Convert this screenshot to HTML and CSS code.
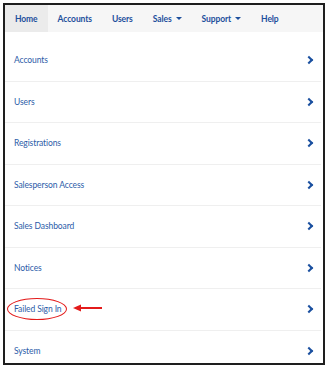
FILE: index.html
```html
<!DOCTYPE html>
<html lang="en">
<head>
    <meta charset="UTF-8">
    <meta name="viewport" content="width=device-width, initial-scale=1.0">
    <title>Admin Menu</title>
    <link rel="stylesheet" href="styles.css">
</head>
<body>
    <div class="frame">
        <nav class="topnav">
            <a class="tab active">Home</a>
            <a class="tab">Accounts</a>
            <a class="tab">Users</a>
            <a class="tab">Sales <span class="caret"></span></a>
            <a class="tab">Support <span class="caret"></span></a>
            <a class="tab">Help</a>
        </nav>

        <ul class="menu">
            <li><a>Accounts</a><span class="chev"></span></li>
            <li><a>Users</a><span class="chev"></span></li>
            <li><a>Registrations</a><span class="chev"></span></li>
            <li><a>Salesperson Access</a><span class="chev"></span></li>
            <li><a>Sales Dashboard</a><span class="chev"></span></li>
            <li><a>Notices</a><span class="chev"></span></li>
            <li class="marked">
                <a>Failed Sign In</a>
                <span class="ring"></span>
                <svg class="pointer" width="30" height="8" viewBox="0 0 30 8">
                    <path d="M6 4 H29" stroke="#e31b1b" stroke-width="2"/>
                    <path d="M0 4 L8 0.5 L8 7.5 Z" fill="#e31b1b"/>
                </svg>
                <span class="chev"></span>
            </li>
            <li><a>System</a><span class="chev"></span></li>
        </ul>
    </div>
</body>
</html>
```

FILE: styles.css
```css
/* General Styling */
body {
    margin: 0;
    background: #fff;
    font-family: 'Lato', 'Liberation Sans', sans-serif;
}

.frame {
    margin: 3px 3px 0 3px;
    width: 318px;
    height: 358px;
    border: 2px solid #1e1e1e;
    overflow: hidden;
    background: #fff;
}

/* Top navigation */
.topnav {
    display: flex;
    height: 27px;
    background: #f6f6f6;
}

.tab {
    display: flex;
    align-items: center;
    padding: 0 10px;
    font-size: 8.5px;
    font-weight: bold;
    color: #1d4f9c;
    letter-spacing: -0.1px;
}

.tab.active {
    background: #ebebeb;
}

.caret {
    display: inline-block;
    margin-left: 4px;
    border-left: 3px solid transparent;
    border-right: 3px solid transparent;
    border-top: 3px solid #1d4f9c;
}

/* Menu list */
.menu {
    list-style: none;
    margin: 0;
    padding: 8px 0 0 0;
}

.menu li {
    position: relative;
    display: flex;
    align-items: center;
    justify-content: space-between;
    height: 41.5px;
    box-sizing: border-box;
    padding: 0 8px 0 9px;
    border-bottom: 1px solid #efefef;
    margin-right: 2px;
}

.menu a {
    font-size: 8.5px;
    color: #2c5ca8;
    letter-spacing: -0.1px;
}

.chev {
    width: 4px;
    height: 4px;
    border-top: 2.5px solid #1a4f9f;
    border-right: 2.5px solid #1a4f9f;
    transform: rotate(45deg);
    margin-right: 1px;
}

.marked .ring {
    position: absolute;
    left: 2px;
    top: 9px;
    width: 58px;
    height: 20px;
    border: 1.5px solid #e31b1b;
    border-radius: 50%;
}

.marked .pointer {
    position: absolute;
    left: 68px;
    top: 15px;
}
```
